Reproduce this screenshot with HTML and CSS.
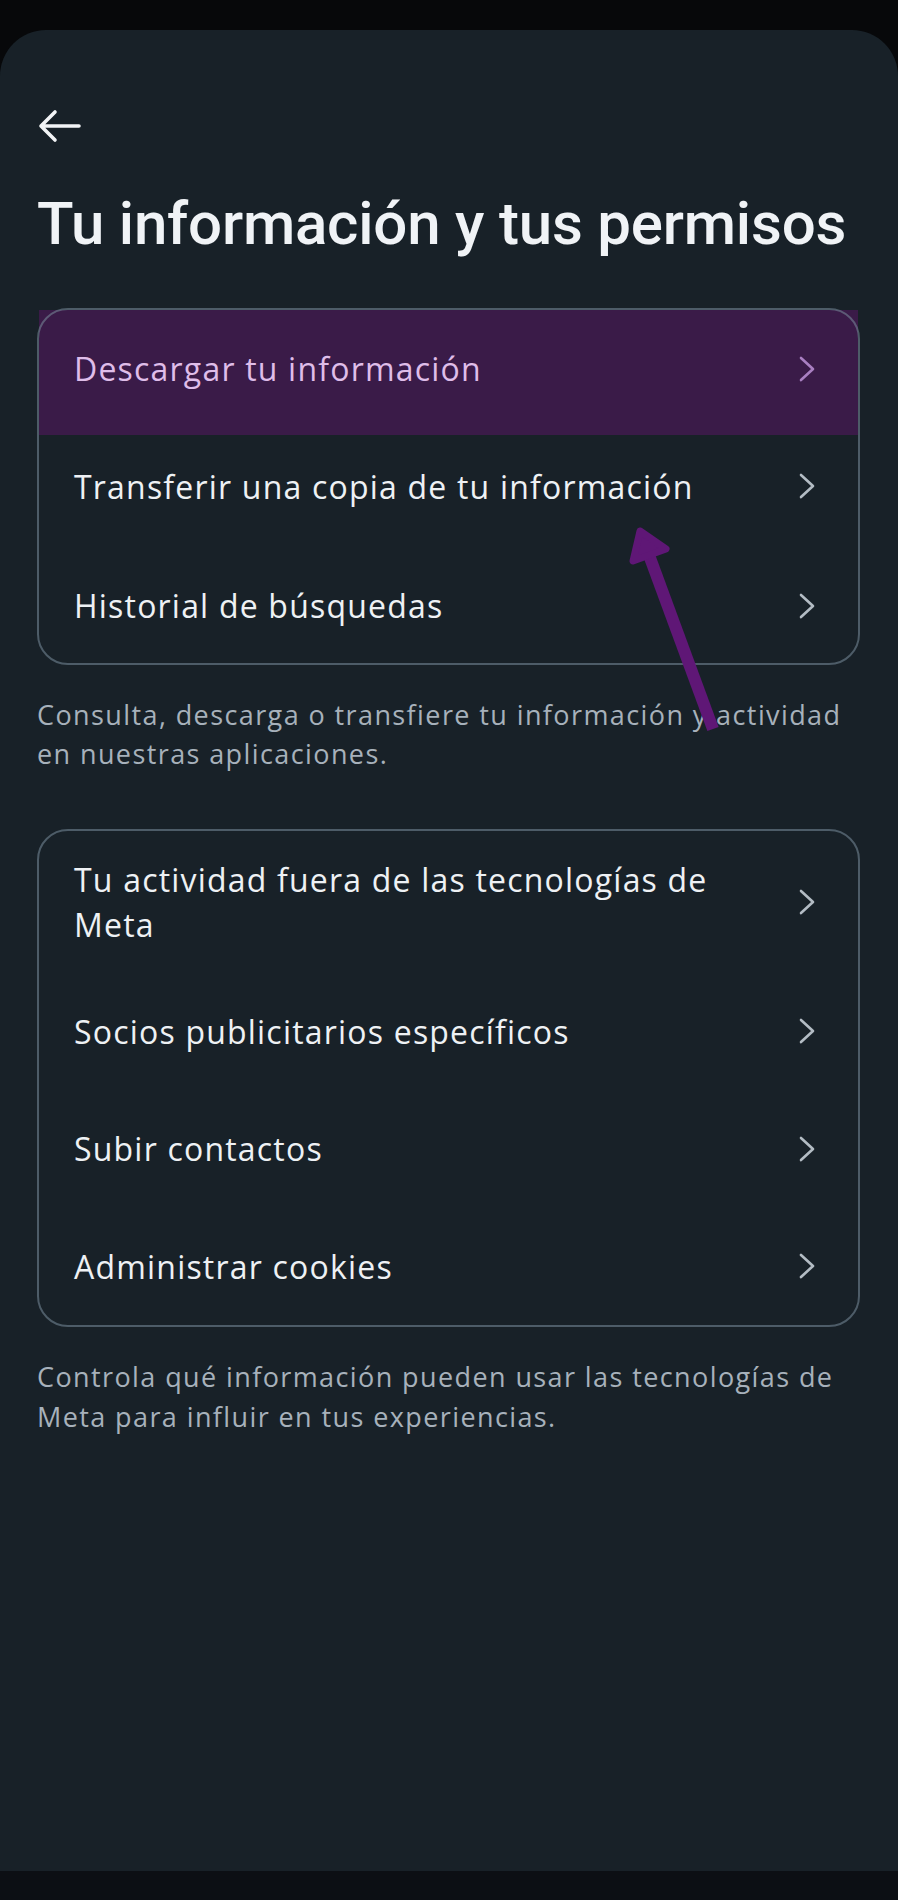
FILE: index.html
```html
<!DOCTYPE html>
<html lang="es">
<head>
<meta charset="utf-8">
<title>Tu información y tus permisos</title>
<link rel="stylesheet" href="styles.css">
</head>
<body>
<div class="status"></div>
<main class="sheet">
  <button class="back" aria-label="Atrás">
    <svg width="44" height="52" viewBox="0 0 44 52"><path d="M42 26H4M18 12L4 26l14 14" fill="none" stroke="#f2f4f6" stroke-width="3.6" stroke-linecap="round" stroke-linejoin="round"/></svg>
  </button>
  <h1 class="title">Tu información y tus permisos</h1>

  <section class="card">
    <a class="row row--active">
      <span class="label">Descargar tu información</span>
      <svg class="chev" width="16" height="26" viewBox="0 0 16 26"><path d="M2 2l12 11L2 24" fill="none" stroke="currentColor" stroke-width="2.6" stroke-linecap="round" stroke-linejoin="round"/></svg>
    </a>
    <a class="row">
      <span class="label">Transferir una copia de tu información</span>
      <svg class="chev" width="16" height="26" viewBox="0 0 16 26"><path d="M2 2l12 11L2 24" fill="none" stroke="currentColor" stroke-width="2.6" stroke-linecap="round" stroke-linejoin="round"/></svg>
    </a>
    <a class="row row--last">
      <span class="label">Historial de búsquedas</span>
      <svg class="chev" width="16" height="26" viewBox="0 0 16 26"><path d="M2 2l12 11L2 24" fill="none" stroke="currentColor" stroke-width="2.6" stroke-linecap="round" stroke-linejoin="round"/></svg>
    </a>
  </section>
  <p class="caption">Consulta, descarga o transfiere tu información y actividad en nuestras aplicaciones.</p>

  <section class="card card--second">
    <a class="row row--tall">
      <span class="label">Tu actividad fuera de las tecnologías de Meta</span>
      <svg class="chev" width="16" height="26" viewBox="0 0 16 26"><path d="M2 2l12 11L2 24" fill="none" stroke="currentColor" stroke-width="2.6" stroke-linecap="round" stroke-linejoin="round"/></svg>
    </a>
    <a class="row">
      <span class="label">Socios publicitarios específicos</span>
      <svg class="chev" width="16" height="26" viewBox="0 0 16 26"><path d="M2 2l12 11L2 24" fill="none" stroke="currentColor" stroke-width="2.6" stroke-linecap="round" stroke-linejoin="round"/></svg>
    </a>
    <a class="row">
      <span class="label">Subir contactos</span>
      <svg class="chev" width="16" height="26" viewBox="0 0 16 26"><path d="M2 2l12 11L2 24" fill="none" stroke="currentColor" stroke-width="2.6" stroke-linecap="round" stroke-linejoin="round"/></svg>
    </a>
    <a class="row">
      <span class="label">Administrar cookies</span>
      <svg class="chev" width="16" height="26" viewBox="0 0 16 26"><path d="M2 2l12 11L2 24" fill="none" stroke="currentColor" stroke-width="2.6" stroke-linecap="round" stroke-linejoin="round"/></svg>
    </a>
  </section>
  <p class="caption">Controla qué información pueden usar las tecnologías de Meta para influir en tus experiencias.</p>
</main>
<div class="navbar"></div>

<svg class="annotation" width="898" height="1900" viewBox="0 0 898 1900" aria-hidden="true">
  <line x1="713" y1="729" x2="649" y2="555" stroke="#5f1776" stroke-width="12"/>
  <polygon points="640,531 666,549 633,561" fill="#5f1776" stroke="#5f1776" stroke-width="7" stroke-linejoin="round"/>
</svg>
</body>
</html>
```

FILE: styles.css
```css
* { box-sizing: border-box; }

html, body {
  margin: 0;
  padding: 0;
}

body {
  width: 898px;
  height: 1900px;
  display: flex;
  flex-direction: column;
  background: #07080a;
  font-family: "Open Sans", "Noto Sans", "Liberation Sans", sans-serif;
  position: relative;
  overflow: hidden;
}

.status {
  height: 30px;
  flex-shrink: 0;
  background: #07080a;
}

.sheet {
  flex: 1;
  background: #182128;
  border-radius: 46px 46px 0 0;
  padding: 70px 38px 0 37px;
}

.navbar {
  height: 29px;
  flex-shrink: 0;
  background: #0c0f14;
}

.back {
  display: block;
  width: 44px;
  height: 52px;
  padding: 0;
  margin: 0;
  border: 0;
  background: none;
}

.back svg { display: block; }

.title {
  margin: 36px 0 0 0;
  font-family: Roboto, "Open Sans", sans-serif;
  font-size: 60px;
  line-height: 72px;
  font-weight: 500;
  color: #f0f3f6;
  letter-spacing: -0.2px;
}

.card {
  position: relative;
  margin-top: 48px;
  padding: 2px;
  display: flex;
  flex-direction: column;
}

.card::after {
  content: "";
  position: absolute;
  inset: 0;
  border: 2px solid rgba(122, 142, 157, 0.55);
  border-radius: 31px;
  pointer-events: none;
}

.card--second { margin-top: 55px; }

.row {
  display: flex;
  align-items: center;
  min-height: 117.5px;
  padding: 0 43px 0 35px;
  color: #b3bcc4;
  text-decoration: none;
}

.row--last { padding-top: 4px; }

.row--tall {
  min-height: 142px;
  padding-top: 26px;
  padding-bottom: 26px;
}

.row--active {
  position: relative;
  z-index: 0;
  color: #a97fc2;
}

.row--active::before {
  content: "";
  position: absolute;
  left: 0;
  right: 0;
  top: 0;
  height: 125px;
  background: #3a1b48;
  z-index: -1;
}

.label {
  flex: 1;
  font-size: 32px;
  line-height: 45px;
  letter-spacing: 1.2px;
  color: #eef1f4;
}

.row--active .label { color: #dfbde9; }

.chev {
  flex-shrink: 0;
  margin-left: 29px;
  display: block;
}

.caption {
  margin: 30px 0 0 0;
  font-size: 27px;
  line-height: 39.5px;
  letter-spacing: 1.4px;
  color: #a7b1bb;
}

.annotation {
  position: absolute;
  left: 0;
  top: 0;
  pointer-events: none;
}
```
